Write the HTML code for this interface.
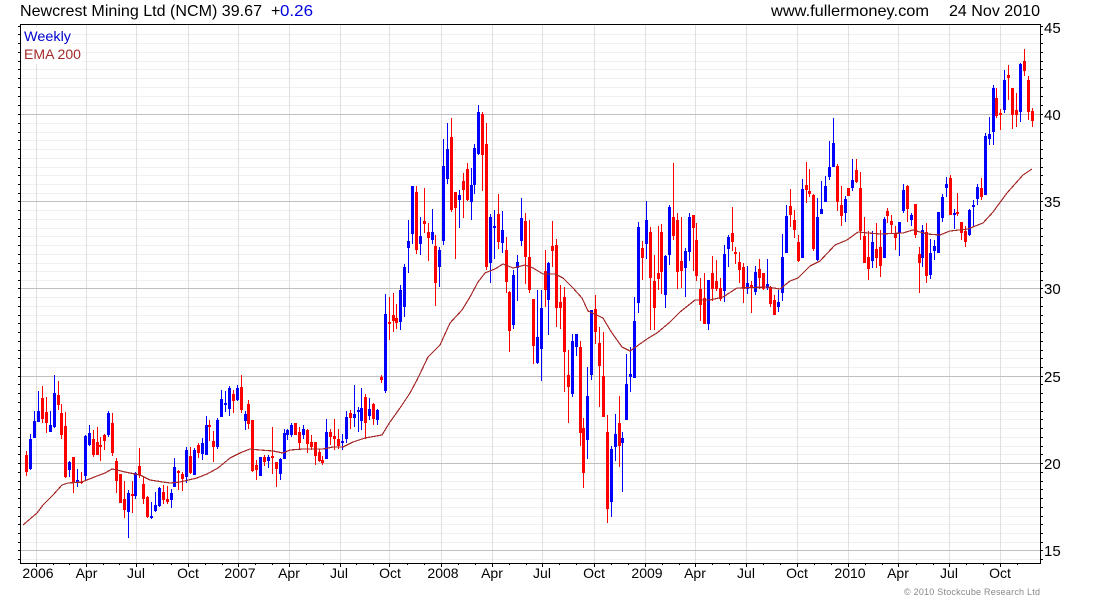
<!DOCTYPE html>
<html><head><meta charset="utf-8"><title>Newcrest Mining Ltd (NCM)</title>
<style>html,body{margin:0;padding:0;background:#fff}svg{display:block}text{font-family:"Liberation Sans",Arial,sans-serif}</style></head>
<body>
<svg width="1100" height="600" viewBox="0 0 1100 600" xmlns="http://www.w3.org/2000/svg">
<defs>
<path id="mt" d="M0 26.5h3M0 34.5h3M0 43.5h3M0 52.5h3M0 61.5h3M0 69.5h3M0 78.5h3M0 87.5h3M0 96.5h3M0 105.5h3M0 114.5h3M0 123.5h3M0 132.5h3M0 140.5h3M0 149.5h3M0 158.5h3M0 167.5h3M0 175.5h3M0 184.5h3M0 193.5h3M0 201.5h3M0 210.5h3M0 219.5h3M0 228.5h3M0 236.5h3M0 245.5h3M0 254.5h3M0 263.5h3M0 271.5h3M0 280.5h3M0 288.5h3M0 297.5h3M0 306.5h3M0 315.5h3M0 323.5h3M0 332.5h3M0 341.5h3M0 350.5h3M0 358.5h3M0 367.5h3M0 376.5h3M0 384.5h3M0 393.5h3M0 402.5h3M0 411.5h3M0 419.5h3M0 428.5h3M0 437.5h3M0 446.5h3M0 454.5h3M0 463.5h3M0 472.5h3M0 481.5h3M0 489.5h3M0 498.5h3M0 507.5h3M0 516.5h3M0 524.5h3M0 533.5h3M0 542.5h3M0 550.5h3M0 559.5h3"/>
</defs>
<g shape-rendering="crispEdges" fill="none">
<path stroke="#f0f0f0" d="M21 34.5H1040M21 43.5H1040M21 52.5H1040M21 61.5H1040M21 69.5H1040M21 78.5H1040M21 87.5H1040M21 96.5H1040M21 105.5H1040M21 123.5H1040M21 132.5H1040M21 140.5H1040M21 149.5H1040M21 158.5H1040M21 167.5H1040M21 175.5H1040M21 184.5H1040M21 193.5H1040M21 210.5H1040M21 219.5H1040M21 228.5H1040M21 236.5H1040M21 245.5H1040M21 254.5H1040M21 263.5H1040M21 271.5H1040M21 280.5H1040M21 297.5H1040M21 306.5H1040M21 315.5H1040M21 323.5H1040M21 332.5H1040M21 341.5H1040M21 350.5H1040M21 358.5H1040M21 367.5H1040M21 384.5H1040M21 393.5H1040M21 402.5H1040M21 411.5H1040M21 419.5H1040M21 428.5H1040M21 437.5H1040M21 446.5H1040M21 454.5H1040M21 472.5H1040M21 481.5H1040M21 489.5H1040M21 498.5H1040M21 507.5H1040M21 516.5H1040M21 524.5H1040M21 533.5H1040M21 542.5H1040M21 559.5H1040"/>
<path stroke="#e0e0e0" d="M36.5 25V563M86.5 25V563M136.5 25V563M188.5 25V563M238.5 25V563M289.5 25V563M340.5 25V563M389.5 25V563M441.5 25V563M492.5 25V563M542.5 25V563M594.5 25V563M645.5 25V563M695.5 25V563M746.5 25V563M797.5 25V563M848.5 25V563M898.5 25V563M949.5 25V563M1000.5 25V563"/>
<path stroke="#c0c0c0" d="M21 114.5H1040M21 201.5H1040M21 288.5H1040M21 376.5H1040M21 463.5H1040M21 550.5H1040"/>
<rect x="22" y="27" width="50" height="18" fill="#fff"/>
<rect x="22" y="45" width="60" height="19" fill="#fff"/>

<!-- wicks -->
<path stroke="#00f" stroke-width="1" d="M30.5 434V470M34.5 411V438M38.5 391V422M50.5 411V432M54.5 375V428M69.5 461V477M77.5 469V487M85.5 435V480M89.5 425V446M108.5 411V437M128.5 490V538M135.5 472V499M151.5 502V519M155.5 492V512M159.5 487V507M171.5 489V508M174.5 458V487M186.5 447V483M194.5 448V475M202.5 438V460M206.5 416V455M217.5 418V449M221.5 390V417M225.5 391V412M229.5 386V416M237.5 385V401M245.5 411V430M260.5 457V476M268.5 455V468M280.5 458V480M284.5 429V459M287.5 429V440M291.5 423V437M303.5 425V439M326.5 419V459M342.5 434V450M346.5 411V443M354.5 385V427M358.5 407V432M361.5 388V430M369.5 398V420M377.5 409V425M385.5 294V393M400.5 285V330M404.5 264V317M408.5 220V273M412.5 186V244M420.5 217V255M432.5 209V244M439.5 247V287M443.5 139V245M447.5 123V184M459.5 190V228M471.5 168V220M474.5 144V194M478.5 105V155M490.5 214V283M494.5 210V259M502.5 211V253M513.5 270V329M517.5 255V301M521.5 198V246M537.5 290V364M541.5 290V381M548.5 262V335M572.5 334V397M576.5 334V356M587.5 367V459M591.5 310V380M611.5 446V517M615.5 414V461M622.5 432V492M626.5 354V420M630.5 347V392M634.5 297V378M638.5 222V313M646.5 201V259M665.5 255V308M669.5 205V265M685.5 248V297M689.5 213V261M708.5 280V330M724.5 245V302M728.5 235V267M747.5 266V294M755.5 266V295M767.5 259V290M778.5 290V312M782.5 234V301M786.5 205V253M802.5 179V258M817.5 198V261M821.5 181V214M825.5 176V202M829.5 141V180M833.5 118V167M845.5 196V222M852.5 159V191M872.5 231V268M884.5 217V258M899.5 222V256M903.5 184V213M911.5 213V226M922.5 225V267M930.5 239V279M934.5 240V260M938.5 212V253M942.5 194V222M946.5 177V197M954.5 209V229M969.5 209V236M973.5 200V227M977.5 184V205M985.5 133V195M989.5 117V145M993.5 85V145M1004.5 70V113M1020.5 63V122"/>
<path stroke="#f00" stroke-width="1" d="M26.5 451V476M42.5 386V423M46.5 397V433M58.5 381V410M61.5 404V439M65.5 412V478M73.5 457V493M81.5 472V484M93.5 430V457M97.5 427V455M100.5 437V461M104.5 434V450M112.5 413V456M116.5 458V493M120.5 474V503M124.5 481V518M132.5 481V513M139.5 448V478M143.5 477V504M147.5 496V518M163.5 485V504M167.5 486V504M178.5 470V490M182.5 472V491M190.5 447V474M198.5 443V458M209.5 420V441M213.5 431V462M233.5 390V413M241.5 375V413M248.5 400V429M252.5 420V472M256.5 460V480M264.5 455V466M272.5 427V474M276.5 462V487M295.5 423V435M299.5 427V449M307.5 429V453M311.5 435V450M315.5 442V465M319.5 449V462M322.5 456V465M330.5 429V445M334.5 419V450M338.5 429V449M350.5 410V429M365.5 394V439M373.5 403V425M381.5 375V383M389.5 297V340M393.5 293V332M396.5 304V329M416.5 186V254M424.5 188V233M428.5 223V261M435.5 235V306M451.5 118V212M455.5 192V259M463.5 173V218M467.5 163V201M482.5 112V191M486.5 123V270M498.5 194V249M506.5 237V293M509.5 291V352M525.5 213V284M529.5 220V293M533.5 299V364M545.5 250V307M552.5 221V267M556.5 239V327M560.5 285V329M564.5 287V392M568.5 350V423M580.5 341V446M583.5 418V488M595.5 295V344M599.5 327V407M603.5 332V417M607.5 415V523M619.5 396V467M642.5 241V280M650.5 227V330M654.5 255V330M658.5 226V290M661.5 224V294M673.5 163V240M677.5 213V289M681.5 217V288M693.5 215V271M696.5 223V281M700.5 278V321M704.5 273V324M712.5 256V301M716.5 260V291M720.5 278V301M732.5 207V251M735.5 247V264M739.5 252V283M743.5 263V303M751.5 281V313M759.5 259V289M763.5 273V290M770.5 286V307M774.5 295V315M790.5 189V227M794.5 210V238M798.5 235V262M806.5 162V203M809.5 169V197M813.5 194V251M837.5 164V211M841.5 186V226M848.5 188V196M856.5 159V183M860.5 172V240M864.5 217V263M868.5 231V280M876.5 223V268M880.5 230V277M887.5 208V223M891.5 215V233M895.5 226V250M907.5 185V222M915.5 204V238M919.5 247V293M926.5 223V283M950.5 175V215M957.5 193V216M961.5 222V240M965.5 226V247M981.5 178V200M996.5 88V118M1000.5 109V130M1008.5 65V100M1012.5 88V129M1016.5 93V127M1024.5 49V76M1028.5 76V120M1032.5 108V127"/>
<!-- bodies -->
<path stroke="#00f" stroke-width="3" d="M30.5 439V469M34.5 421V438M38.5 411V422M50.5 425V432M54.5 393V427M69.5 462V470M77.5 480V482M85.5 436V476M89.5 433V445M108.5 413V435M128.5 493V512M135.5 473V496M151.5 516V518M155.5 505V511M159.5 488V506M171.5 493V500M174.5 467V487M186.5 450V477M194.5 450V475M202.5 443V454M206.5 425V455M217.5 420V447M221.5 399V417M225.5 403V405M229.5 388V409M237.5 388V400M245.5 414V421M260.5 457V476M268.5 457V461M280.5 459V474M284.5 433V459M287.5 430V435M291.5 425V435M303.5 429V435M326.5 432V459M342.5 441V443M346.5 417V439M354.5 414V418M358.5 410V412M361.5 408V421M369.5 409V416M377.5 410V420M385.5 314V391M400.5 290V322M404.5 267V307M408.5 241V248M412.5 186V234M420.5 236V244M432.5 232V240M439.5 250V267M443.5 166V241M447.5 149V179M459.5 195V200M471.5 185V202M474.5 148V185M478.5 112V154M490.5 217V263M494.5 226V228M502.5 230V243M513.5 275V325M517.5 262V268M521.5 218V241M537.5 337V363M541.5 308V349M548.5 263V300M572.5 341V394M576.5 334V347M587.5 396V440M591.5 310V375M611.5 449V502M615.5 434V447M622.5 438V443M626.5 384V420M630.5 374V377M634.5 321V378M638.5 227V303M646.5 220V244M665.5 256V295M669.5 207V255M685.5 251V268M689.5 217V252M708.5 280V324M724.5 254V291M728.5 237V249M747.5 283V289M755.5 272V292M767.5 284V288M778.5 302V307M782.5 257V293M786.5 216V253M802.5 189V258M817.5 217V260M821.5 209V214M825.5 186V202M829.5 167V177M833.5 143V167M845.5 199V213M852.5 180V188M872.5 242V261M884.5 219V258M899.5 222V233M903.5 190V211M911.5 215V220M922.5 230V258M930.5 253V275M934.5 246V251M938.5 212V253M942.5 197V218M946.5 184V188M954.5 213V215M969.5 210V235M973.5 205V207M977.5 187V199M985.5 136V195M989.5 134V139M993.5 88V132M1004.5 80V110M1020.5 64V112"/>
<path stroke="#f00" stroke-width="3" d="M26.5 455V472M42.5 398V419M46.5 412V423M58.5 395V405M61.5 413V435M65.5 426V477M73.5 457V482M81.5 482V483M93.5 439V455M97.5 442V455M100.5 445V447M104.5 435V441M112.5 423V453M116.5 461V481M120.5 474V503M124.5 499V510M132.5 494V496M139.5 466V475M143.5 484V499M147.5 497V517M163.5 492V500M167.5 499V502M178.5 471V473M182.5 474V479M190.5 456V473M198.5 445V453M209.5 425V427M213.5 441V447M233.5 394V401M241.5 387V410M248.5 404V424M252.5 420V471M256.5 465V470M264.5 457V462M272.5 456V458M276.5 462V469M295.5 423V435M299.5 432V443M307.5 430V444M311.5 442V447M315.5 442V456M319.5 452V461M322.5 460V463M330.5 432V437M334.5 436V439M338.5 439V446M350.5 413V418M365.5 397V423M373.5 404V419M381.5 377V380M389.5 322V324M393.5 315V321M396.5 318V323M416.5 192V250M424.5 221V224M428.5 232V238M435.5 246V283M451.5 137V210M455.5 192V208M463.5 181V190M467.5 169V200M482.5 114V155M486.5 144V267M498.5 214V242M506.5 250V282M509.5 292V331M525.5 221V257M529.5 257V290M533.5 299V346M545.5 271V290M552.5 246V251M556.5 245V308M560.5 302V308M564.5 297V352M568.5 375V387M580.5 347V433M583.5 428V473M595.5 309V332M599.5 343V366M603.5 376V417M607.5 432V509M619.5 423V446M642.5 248V258M650.5 232V278M654.5 281V308M658.5 273V279M661.5 232V272M673.5 217V236M677.5 220V272M681.5 261V271M693.5 215V228M696.5 240V276M700.5 289V305M704.5 298V324M712.5 273V289M716.5 281V289M720.5 288V299M732.5 233V242M735.5 252V254M739.5 262V270M743.5 267V289M751.5 285V287M759.5 269V278M763.5 273V289M770.5 287V304M774.5 300V315M790.5 206V215M794.5 220V230M798.5 242V261M806.5 185V190M809.5 191V194M813.5 195V249M837.5 166V202M841.5 205V216M848.5 188V196M856.5 170V182M860.5 188V231M864.5 236V263M868.5 257V269M876.5 249V258M880.5 247V266M887.5 211V216M891.5 221V225M895.5 234V238M907.5 186V209M915.5 204V235M919.5 254V263M926.5 232V276M950.5 178V215M957.5 212V214M961.5 222V233M965.5 231V242M981.5 188V197M996.5 98V116M1000.5 113V115M1008.5 75V78M1012.5 88V115M1016.5 110V115M1024.5 61V71M1028.5 80V112M1032.5 111V121"/>
</g>
<!-- EMA -->
<polyline fill="none" stroke="#a52a2a" stroke-width="1.2" shape-rendering="crispEdges" points="23,525 37,513 43,505 53,495 62,485 68,483 82,482 97,476 105,473 112,469 117,470 125,472 140,475 150,480 163,482 170,483 180,482 197,478 207,474 218,468 230,458 240,453 250,449 260,450 273,451 283,453 290,450 303,449 323,449 333,447 343,447 353,442 365,438 382,435 390,422 400,408 410,393 417,380 428,357 440,345 450,323 462,310 470,297 478,282 485,273 495,269 503,264 513,268 525,265 533,268 543,274 555,274 563,278 573,288 582,298 588,311 603,318 612,333 622,347 630,351 647,339 657,333 670,322 680,312 695,300 710,300 723,297 737,288 767,287 780,289 790,281 798,278 810,266 820,261 835,245 847,240 858,232 868,233 880,234 903,233 913,230 927,234 940,235 950,231 968,229 983,223 993,212 1007,193 1023,175 1032,169"/>
<!-- frame and ticks -->
<g shape-rendering="crispEdges" fill="none" stroke="#000">
<path d="M20.5 24.5H1040.5V563.5H20.5Z"/>
<use href="#mt" x="18"/>
<use href="#mt" x="1040"/>
<path d="M36.5 563v4M86.5 563v4M136.5 563v4M188.5 563v4M238.5 563v4M289.5 563v4M340.5 563v4M389.5 563v4M441.5 563v4M492.5 563v4M542.5 563v4M594.5 563v4M645.5 563v4M695.5 563v4M746.5 563v4M797.5 563v4M848.5 563v4M898.5 563v4M949.5 563v4M1000.5 563v4M53.5 563v2M69.5 563v2M103.5 563v2M119.5 563v2M153.5 563v2M171.5 563v2M205.5 563v2M222.5 563v2M255.5 563v2M272.5 563v2M306.5 563v2M323.5 563v2M356.5 563v2M373.5 563v2M407.5 563v2M424.5 563v2M458.5 563v2M475.5 563v2M509.5 563v2M526.5 563v2M559.5 563v2M576.5 563v2M611.5 563v2M628.5 563v2M662.5 563v2M679.5 563v2M712.5 563v2M729.5 563v2M763.5 563v2M780.5 563v2M814.5 563v2M831.5 563v2M865.5 563v2M882.5 563v2M916.5 563v2M933.5 563v2M966.5 563v2M983.5 563v2M1017.5 563v2"/>
</g>
<!-- header -->
<text x="20" y="16" font-size="16" fill="#000" textLength="242" lengthAdjust="spacingAndGlyphs">Newcrest Mining Ltd (NCM) 39.67</text>
<text x="271" y="16" font-size="16" fill="#000">+</text>
<text x="280" y="16" font-size="16" fill="#0000e0" textLength="33" lengthAdjust="spacingAndGlyphs">0.26</text>
<text x="771" y="16" font-size="16" fill="#000" textLength="158" lengthAdjust="spacingAndGlyphs">www.fullermoney.com</text>
<text x="949" y="16" font-size="16" fill="#000" textLength="91" lengthAdjust="spacingAndGlyphs">24 Nov 2010</text>
<!-- legend -->
<text x="24" y="41" font-size="13.5" fill="#0000d0" textLength="47" lengthAdjust="spacingAndGlyphs">Weekly</text>
<text x="24" y="59" font-size="13.5" fill="#a52a2a" textLength="57" lengthAdjust="spacingAndGlyphs">EMA 200</text>
<!-- y labels -->
<g font-size="15" fill="#000">
<text x="1044" y="33">45</text><text x="1044" y="120">40</text><text x="1044" y="207">35</text><text x="1044" y="294">30</text><text x="1044" y="382">25</text><text x="1044" y="469">20</text><text x="1044" y="556">15</text>
</g>
<!-- x labels -->
<g font-size="14" fill="#000" text-anchor="middle">
<text x="38" y="578">2006</text><text x="86.5" y="578">Apr</text><text x="136" y="578">Jul</text><text x="188" y="578">Oct</text><text x="240" y="578">2007</text><text x="289" y="578">Apr</text><text x="339" y="578">Jul</text><text x="390" y="578">Oct</text><text x="443" y="578">2008</text><text x="492" y="578">Apr</text><text x="542" y="578">Jul</text><text x="594" y="578">Oct</text><text x="647" y="578">2009</text><text x="695" y="578">Apr</text><text x="746" y="578">Jul</text><text x="797" y="578">Oct</text><text x="850" y="578">2010</text><text x="898" y="578">Apr</text><text x="949" y="578">Jul</text><text x="1000" y="578">Oct</text>
</g>
<text x="904" y="595" font-size="9" fill="#888" textLength="136" lengthAdjust="spacing">© 2010 Stockcube Research Ltd</text>
</svg>
</body></html>
